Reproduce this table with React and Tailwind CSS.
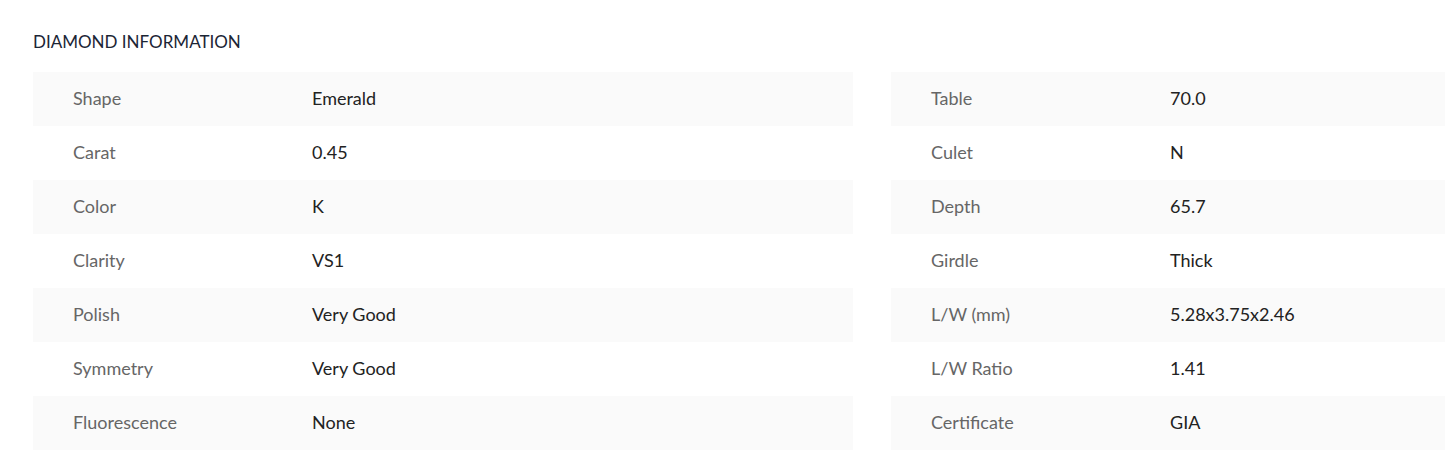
const left = [
  ['Shape', 'Emerald'],
  ['Carat', '0.45'],
  ['Color', 'K'],
  ['Clarity', 'VS1'],
  ['Polish', 'Very Good'],
  ['Symmetry', 'Very Good'],
  ['Fluorescence', 'None'],
];

const right = [
  ['Table', '70.0'],
  ['Culet', 'N'],
  ['Depth', '65.7'],
  ['Girdle', 'Thick'],
  ['L/W (mm)', '5.28x3.75x2.46'],
  ['L/W Ratio', '1.41'],
  ['Certificate', 'GIA'],
];

function InfoTable({ rows, className }) {
  return (
    <div className={className}>
      {rows.map(([label, value], i) => (
        <div
          key={label}
          className={`flex h-[54px] items-center pb-px pl-10 ${i % 2 === 0 ? 'bg-[#fafafa]' : 'bg-white'}`}
        >
          <span className="w-[239px] shrink-0 text-[#666666]">{label}</span>
          <span className="text-[#222222]">{value}</span>
        </div>
      ))}
    </div>
  );
}

export default function App() {
  return (
    <div className="min-h-[476px] bg-white pl-[33px] pt-[31px] text-[18px] font-['Lato','Open_Sans',sans-serif]">
      <h2 className="mb-[19px] text-[17px] leading-[22px] text-[#1b2535]">DIAMOND INFORMATION</h2>
      <div className="flex gap-[38px]">
        <InfoTable rows={left} className="w-[820px] shrink-0" />
        <InfoTable rows={right} className="flex-1" />
      </div>
    </div>
  );
}
